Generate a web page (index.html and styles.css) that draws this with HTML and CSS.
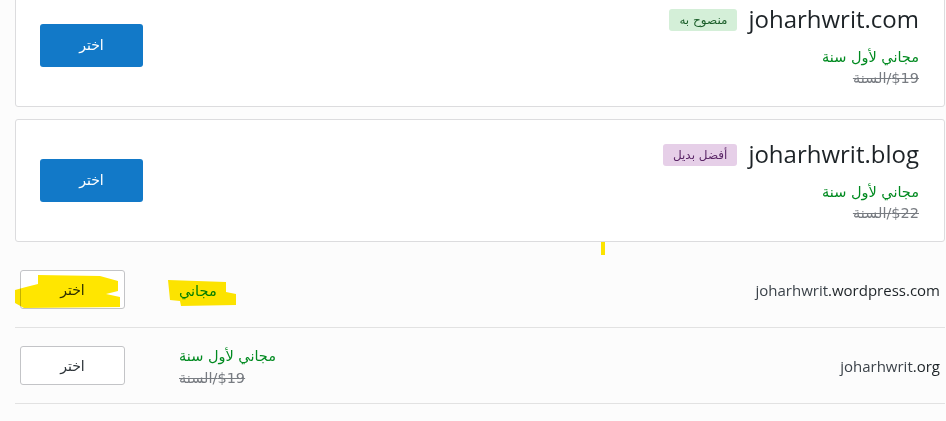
FILE: index.html
```html
<!DOCTYPE html>
<html lang="ar" dir="rtl">
<head>
<meta charset="utf-8">
<title>Domains</title>
<link rel="stylesheet" href="styles.css">
</head>
<body>
<div class="page">
  <div class="card first">
    <div class="info">
      <div class="title-row">
        <span class="domain">joharhwrit.com</span>
        <span class="badge badge-green">منصوح به</span>
      </div>
      <div class="price">
        <div class="free">مجاني لأول سنة</div>
        <div class="old"><s>$19/السنة</s></div>
      </div>
    </div>
    <button class="btn-primary">اختر</button>
  </div>

  <div class="card">
    <div class="info">
      <div class="title-row">
        <span class="domain">joharhwrit.blog</span>
        <span class="badge badge-purple">أفضل بديل</span>
      </div>
      <div class="price">
        <div class="free">مجاني لأول سنة</div>
        <div class="old"><s>$22/السنة</s></div>
      </div>
    </div>
    <button class="btn-primary">اختر</button>
  </div>

  <div class="rows">
    <div class="row">
      <div class="row-domain"><span class="sub">joharhwrit</span>.wordpress.com</div>
      <div class="row-price">
        <div class="free">مجاني</div>
      </div>
      <button class="btn-outline">اختر</button>
    </div>
    <div class="row">
      <div class="row-domain"><span class="sub">joharhwrit</span>.org</div>
      <div class="row-price">
        <div class="free">مجاني لأول سنة</div>
        <div class="old"><s>$19/السنة</s></div>
      </div>
      <button class="btn-outline">اختر</button>
    </div>
  </div>
</div>

<svg class="marks" width="946" height="421" viewBox="0 0 946 421" aria-hidden="true">
  <path class="hl" d="M38 275 L100 276 L118 281 L118 291 L106 294 L120 297 L120 307 L24 308 L15 303 L15 290 L26 287 L38 284 Z"/>
  <path class="hl" d="M168 280 L226 282 L226 292 L236 294 L236 305 L181 306 L180 301 L170 300 Z"/>
  <rect class="hl" x="601" y="242" width="4" height="13"/>
</svg>
</body>
</html>
```

FILE: styles.css
```css
html, body {
  margin: 0;
  padding: 0;
}

body {
  background: #fcfcfc;
  direction: rtl;
  font-family: "DejaVu Sans", "Open Sans", sans-serif;
  overflow: hidden;
  position: relative;
  height: 421px;
}

.page {
  margin: -16px 1px 0 15px;
}

.card {
  background: #fff;
  border: 1px solid #dcdcde;
  border-radius: 3px;
  display: flex;
  align-items: center;
  padding: 16px 25px 17px 24px;
  margin-bottom: 12px;
}

.card + .card {
  margin-bottom: 0;
}

.info {
  display: flex;
  flex-direction: column;
  align-items: flex-start;
}

.title-row {
  display: flex;
  align-items: center;
  gap: 11px;
  height: 36px;
}

.domain {
  font-family: "Open Sans", "Noto Sans", sans-serif;
  font-size: 24px;
  line-height: 36px;
  color: #1d2327;
  direction: ltr;
}

.badge {
  font-size: 12px;
  line-height: 22px;
  height: 22px;
  padding: 0 10px;
  border-radius: 3px;
  margin-top: 2px;
}

.badge-green {
  background: #d4efd8;
  color: #1b5e2a;
}

.badge-purple {
  background: #e6cfe8;
  color: #5b2667;
}

.price {
  margin-top: 10px;
  font-size: 14.5px;
  line-height: 21px;
}

.free {
  color: #008a20;
}

.old {
  color: #787c82;
}

.old s {
  text-decoration-color: #787c82;
}

.btn-primary {
  margin-right: auto;
  width: 103px;
  height: 43px;
  background: #1279c8;
  color: #fff;
  border: 0;
  border-radius: 3px;
  font-family: "DejaVu Sans", sans-serif;
  font-size: 14px;
}

.rows {
  margin-top: 10px;
}

.row {
  display: flex;
  align-items: center;
  height: 75px;
  padding: 0 5px;
  border-bottom: 1px solid #e2e2e2;
}

.row-domain {
  font-family: "Open Sans", "Noto Sans", sans-serif;
  font-size: 15px;
  color: #1d2327;
  direction: ltr;
}

.row-domain .sub {
  color: #3c434a;
}

.row-price {
  margin-right: auto;
  margin-left: 54px;
  text-align: left;
  font-size: 14.5px;
  line-height: 22px;
  padding-top: 3px;
}

.btn-outline {
  width: 105px;
  height: 39px;
  background: #fff;
  border: 1px solid #c3c4c7;
  border-radius: 3px;
  color: #2c3338;
  font-family: "DejaVu Sans", sans-serif;
  font-size: 14px;
}

.marks {
  position: absolute;
  left: 0;
  top: 0;
  pointer-events: none;
  mix-blend-mode: multiply;
}

.hl {
  fill: #ffe600;
}
```
